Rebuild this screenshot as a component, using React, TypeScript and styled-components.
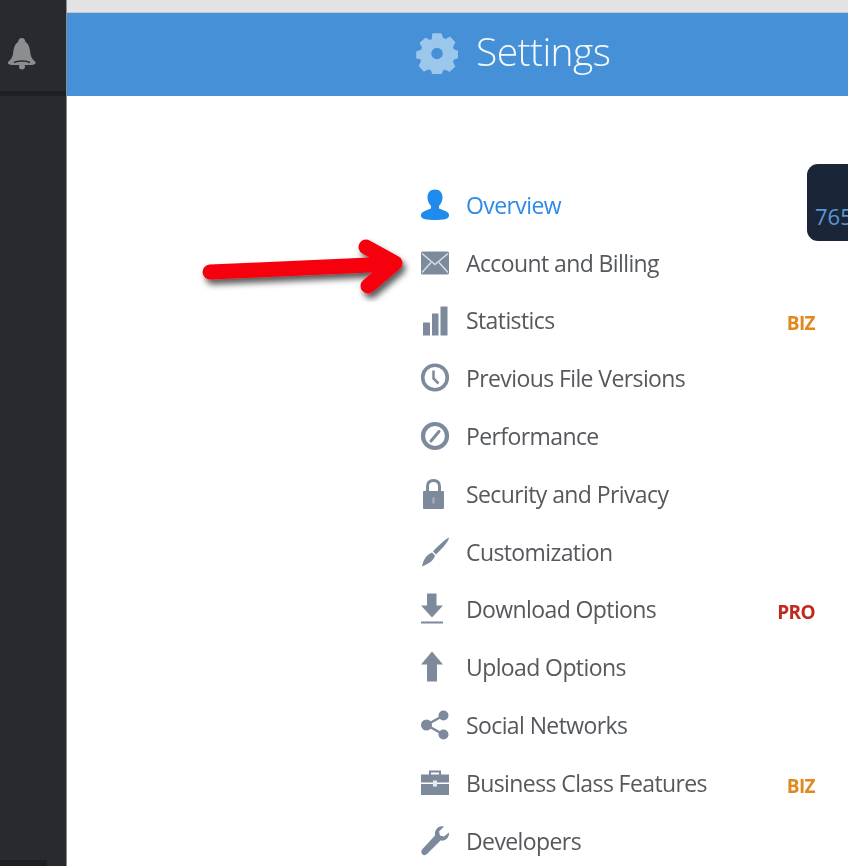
import React from "react";
import styled, { createGlobalStyle } from "styled-components";

const Global = createGlobalStyle`
  html, body {
    margin: 0;
    padding: 0;
    background: #fff;
    overflow: hidden;
  }
`;

const Page = styled.div`
  display: flex;
  width: 848px;
  height: 867px;
  overflow: hidden;
  font-family: "Open Sans", "Noto Sans", sans-serif;
  filter: blur(0.45px);
`;

const Sidebar = styled.aside`
  position: relative;
  flex: 0 0 66px;
  height: 866px;
  background: #272a2f;
  border-right: 1px solid #8a8c8e;
`;

const BellBox = styled.div`
  display: flex;
  align-items: flex-start;
  height: 96px;
  padding: 38px 0 0 8px;
  box-sizing: border-box;
  border-bottom: 5px solid #1d1f23;
  color: #8b8d8e;
`;

const SideFoot = styled.div`
  position: absolute;
  left: 0;
  bottom: 0;
  width: 47px;
  height: 6px;
  background: #1d1f23;
`;

const Main = styled.main`
  position: relative;
  flex: 1;
  display: flex;
  flex-direction: column;
  min-width: 0;
`;

const TopStrip = styled.div`
  flex-shrink: 0;
  height: 12px;
  background: #e3e3e3;
  border-bottom: 1px solid #c9c9c9;
`;

const Header = styled.header`
  flex-shrink: 0;
  display: flex;
  align-items: center;
  gap: 18px;
  height: 83px;
  padding-left: 349px;
  padding-bottom: 3px;
  box-sizing: border-box;
  background: #4590d6;
`;

const HeaderTitle = styled.h1`
  margin: 0 0 6px;
  font-family: "Open Sans", sans-serif;
  font-size: 39px;
  font-weight: 300;
  letter-spacing: -0.6px;
  line-height: 1;
  color: #f4f9fd;
`;

const Content = styled.div`
  flex: 1;
  padding: 80px 0 0 353px;
`;

const Menu = styled.ul`
  list-style: none;
  margin: 0;
  padding: 0;
  width: 395px;
`;

const Row = styled.li`
  display: flex;
  align-items: center;
  height: 57.8px;
`;

const IconSlot = styled.span<{ $active?: boolean }>`
  display: flex;
  flex: 0 0 30px;
  height: 32px;
  align-items: center;
  justify-content: center;
  margin-right: 16px;
  color: ${(p) => (p.$active ? "#1f8bec" : "#7d8a9c")};
`;

const Label = styled.span<{ $active?: boolean }>`
  flex: 1;
  font-size: 23px;
  letter-spacing: -0.6px;
  white-space: nowrap;
  color: ${(p) => (p.$active ? "#2f8ae6" : "#55585c")};
`;

const Badge = styled.span<{ $kind: "BIZ" | "PRO" }>`
  font-size: 19px;
  font-weight: 700;
  letter-spacing: -0.6px;
  padding-top: 6px;
  color: ${(p) => (p.$kind === "BIZ" ? "#e08a1e" : "#bf2a1f")};
`;

const Card = styled.div`
  position: absolute;
  top: 164px;
  left: 740px;
  width: 80px;
  height: 77px;
  padding: 39px 0 0 8px;
  box-sizing: border-box;
  border-radius: 11px;
  background: #1a2637;
  color: #5c96d6;
  font-size: 22px;
  line-height: 26px;
`;

const ArrowOverlay = styled.svg`
  position: absolute;
  left: 131px;
  top: 232px;
`;

const Gear = () => (
  <svg width="42" height="42" viewBox="0 0 42 42" fill="#9cc7ed">
    <path
      fillRule="evenodd"
      stroke="#9cc7ed"
      strokeWidth="1.500"
      strokeLinejoin="round"
      d="M17 2h8l1.500 4.500 3 1.300 4.500-2.300 4.500 5-2.300 4.500 1.200 3 4.600 1.500v6l-4.600 1.500-1.200 3 2.300 4.500-5 4.500-4.500-2.300-2.500 1-1.500 4.300h-8l-1.500-4.300-3-1.200-4.500 2.300-4.500-5 2.300-4.500-1.200-3L1 26v-6l4.600-1.500 1.200-3-2.300-4.500 5-4.500 4.500 2.300 2.500-1zM21 15a6.500 6.500 0 1 0 0 13 6.500 6.500 0 0 0 0-13z"
    />
  </svg>
);

const icons: Record<string, React.ReactNode> = {
  user: (
    <path d="M15 0c5 0 7.500 3.500 7.500 8 0 3.500-1.500 6.500-3.500 8.500v2.500c3 1.500 9 2.500 10 6 .5 2-1 4-3 4.500-3 .8-8 1-11 1s-8-.2-11-1c-2-.5-3.500-2.500-3-4.500 1-3.500 7-4.500 10-6v-2.500C9 14.500 7.500 11.500 7.500 8c0-4.500 2.500-8 7.500-8z" />
  ),
  mail: (
    <>
      <rect x="1" y="4" width="28" height="23" rx="1.500" />
      <path d="M2 6l13 11L28 6M2 25l9-10M28 25l-9-10" fill="none" stroke="#d8dde3" strokeWidth="1.500" />
    </>
  ),
  stats: (
    <>
      <rect x="3" y="18" width="7" height="13" />
      <rect x="12" y="9" width="6.500" height="22" />
      <rect x="20.500" y="2" width="7" height="29" />
    </>
  ),
  clock: (
    <>
      <circle cx="15" cy="15" r="12.300" fill="none" stroke="currentColor" strokeWidth="3.600" />
      <path d="M13.500 8v8l5 5" fill="none" stroke="currentColor" strokeWidth="2.500" />
    </>
  ),
  gauge: (
    <>
      <circle cx="15" cy="15.500" r="12" fill="none" stroke="currentColor" strokeWidth="4.200" />
      <path d="M11 20.500L19 11" fill="none" stroke="currentColor" strokeWidth="3" strokeLinecap="round" />
    </>
  ),
  lock: (
    <>
      <path d="M7.500 14V8c0-4 2-6 6-6s6 2 6 6v6" fill="none" stroke="currentColor" strokeWidth="3" />
      <rect x="3" y="12.500" width="21" height="18" rx="1" />
      <rect x="12.500" y="19" width="2" height="6" fill="#aab3bf" />
    </>
  ),
  brush: (
    <>
      <path d="M29 1c0 4-8 12-13 17l-3-3C17 10 25 3 29 1z" />
      <path d="M12 16l3 3c-1 4-5 8-13 11 1-5 3-11 10-14z" />
    </>
  ),
  download: (
    <>
      <path d="M7 0h9.500v12H23L12 24 1 12h6z" />
      <rect x="1" y="28" width="22" height="2" />
    </>
  ),
  upload: <path d="M12 0l11 13h-6v17H7V13H1z" />,
  share: (
    <>
      <circle cx="23.500" cy="6" r="5" />
      <circle cx="6.500" cy="15.500" r="5.500" />
      <circle cx="23.500" cy="25" r="5" />
      <path d="M23.500 6L6.500 15.500 23.500 25" fill="none" stroke="currentColor" strokeWidth="2.500" />
    </>
  ),
  case: (
    <>
      <path d="M10 8V4h10v4" fill="none" stroke="currentColor" strokeWidth="2" />
      <rect x="1" y="7" width="28" height="8" />
      <rect x="1" y="16.500" width="28" height="11" />
      <rect x="13" y="13" width="4" height="6" fill="#e6e9ed" />
    </>
  ),
  wrench: (
    <path d="M29 7c.5 5-3.500 9-8.500 8L7 28.500c-1.500 1.500-4 1.500-5 0s-1-3.500 .5-5L15 10C14 5 18-.5 24 1l-5 5 1 4 4 1z" />
  ),
};

const MenuIcon = ({ name }: { name: string }) => (
  <svg width="30" height="32" viewBox="0 0 30 31" fill="currentColor">
    {icons[name]}
  </svg>
);

const items: { icon: string; label: string; badge?: "BIZ" | "PRO"; active?: boolean }[] = [
  { icon: "user", label: "Overview", active: true },
  { icon: "mail", label: "Account and Billing" },
  { icon: "stats", label: "Statistics", badge: "BIZ" },
  { icon: "clock", label: "Previous File Versions" },
  { icon: "gauge", label: "Performance" },
  { icon: "lock", label: "Security and Privacy" },
  { icon: "brush", label: "Customization" },
  { icon: "download", label: "Download Options", badge: "PRO" },
  { icon: "upload", label: "Upload Options" },
  { icon: "share", label: "Social Networks" },
  { icon: "case", label: "Business Class Features", badge: "BIZ" },
  { icon: "wrench", label: "Developers" },
];

export default function App() {
  return (
    <Page>
      <Global />
      <Sidebar>
        <BellBox>
          <svg width="28" height="32" viewBox="0 0 28 32" fill="currentColor">
            <path d="M14 0c2 0 3 1.500 3.500 4 3.500 2 4.500 7 5 12 .3 3 2.500 6 5 8 1 1.500-1 2.500-4 3H4c-3-.5-5-1.500-4-3 2.500-2 4.700-5 5-8 .5-5 1.500-10 5-12 .5-2.500 1.500-4 4-4z" />
            <path d="M6 24.500c4-2 12-2 16 0" fill="none" stroke="#272a2f" strokeWidth="1.500" />
            <circle cx="14" cy="28.500" r="3" />
          </svg>
        </BellBox>
        <SideFoot />
      </Sidebar>
      <Main>
        <TopStrip />
        <Header>
          <Gear />
          <HeaderTitle>Settings</HeaderTitle>
        </Header>
        <Content>
          <Menu>
            {items.map((item) => (
              <Row key={item.label}>
                <IconSlot $active={item.active}>
                  <MenuIcon name={item.icon} />
                </IconSlot>
                <Label $active={item.active}>{item.label}</Label>
                {item.badge && <Badge $kind={item.badge}>{item.badge}</Badge>}
              </Row>
            ))}
          </Menu>
        </Content>
        <Card>765</Card>
        <ArrowOverlay width="220" height="70" viewBox="0 0 220 70">
          <defs>
            <filter id="arrowShadow" x="-10%" y="-30%" width="120%" height="170%">
              <feDropShadow dx="3" dy="5" stdDeviation="3" floodColor="#000" floodOpacity="0.65" />
            </filter>
          </defs>
          <path
            d="M12 40L194 32M168 15L197 31 170 54"
            fill="none"
            stroke="#f7000f"
            strokeWidth="15"
            strokeLinecap="round"
            strokeLinejoin="round"
            filter="url(#arrowShadow)"
          />
        </ArrowOverlay>
      </Main>
    </Page>
  );
}
